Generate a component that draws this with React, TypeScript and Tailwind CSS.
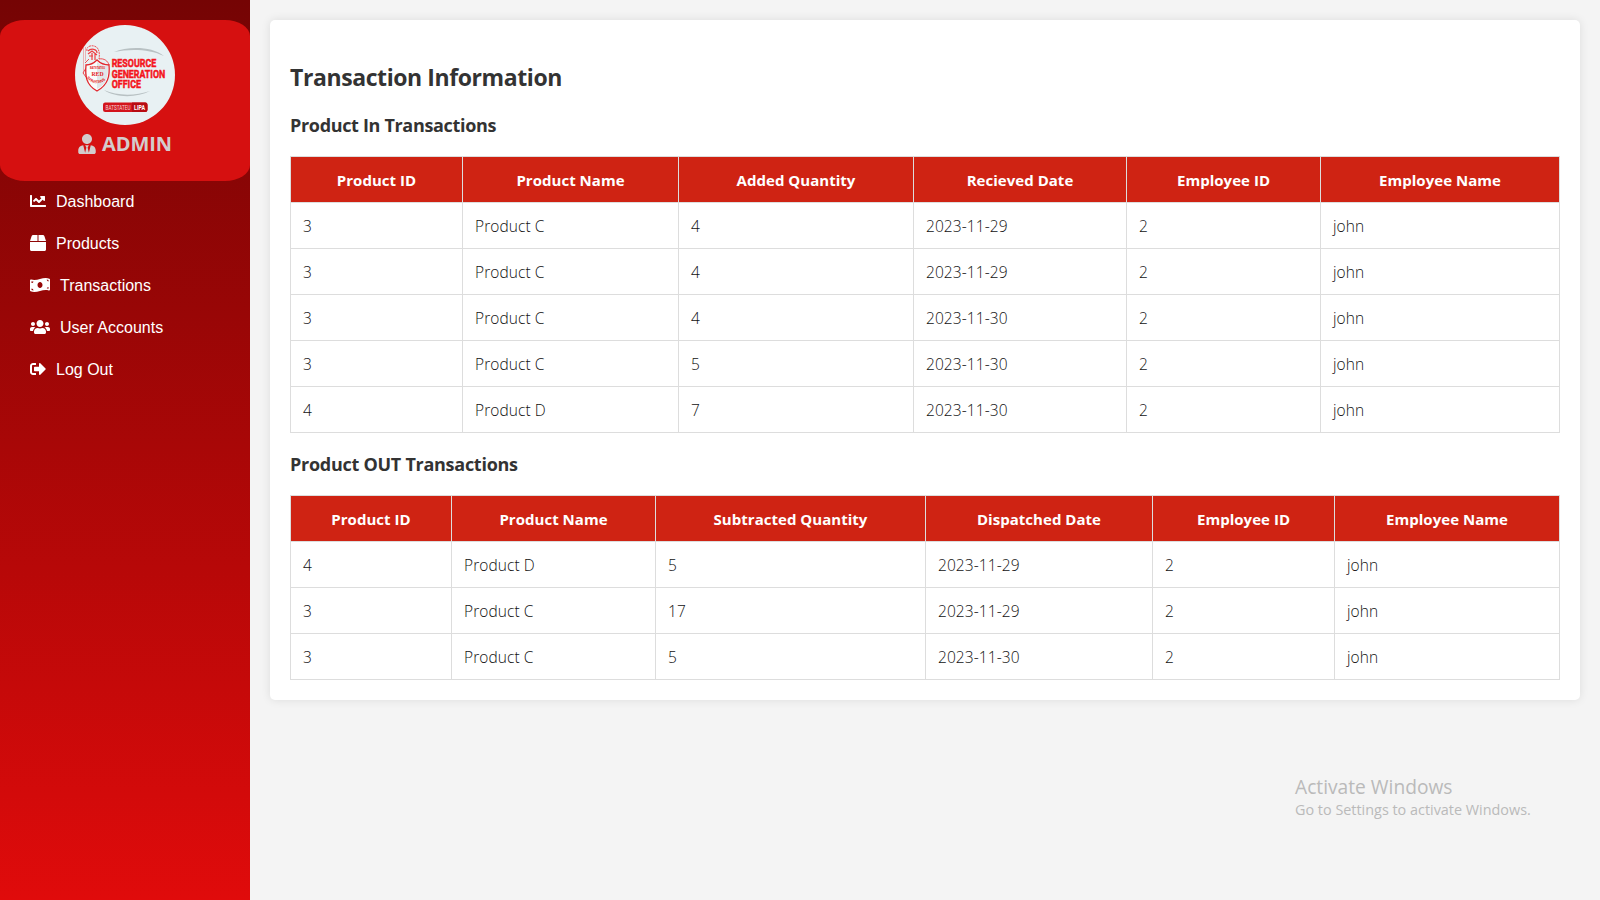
import {
  FaBox,
  FaChartLine,
  FaMoneyBillWave,
  FaSignOutAlt,
  FaUsers,
  FaUserTie,
} from "react-icons/fa";
import type { IconType } from "react-icons";

const UI_FONT = "font-['Open_Sans','Noto_Sans',sans-serif]";

type NavItem = { label: string; icon: IconType; iconClass: string };

const navItems: NavItem[] = [
  { label: "Dashboard", icon: FaChartLine, iconClass: "mb-0.5 h-4 w-4" },
  { label: "Products", icon: FaBox, iconClass: "mb-0.5 h-4 w-4" },
  { label: "Transactions", icon: FaMoneyBillWave, iconClass: "mb-0.5 h-4 w-5" },
  { label: "User Accounts", icon: FaUsers, iconClass: "mb-0.5 h-4 w-5" },
  { label: "Log Out", icon: FaSignOutAlt, iconClass: "mb-0.5 h-4 w-4" },
];

type Column = { label: string; width: string };

const inColumns: Column[] = [
  { label: "Product ID", width: "w-[172px]" },
  { label: "Product Name", width: "w-[216px]" },
  { label: "Added Quantity", width: "w-[235px]" },
  { label: "Recieved Date", width: "w-[213px]" },
  { label: "Employee ID", width: "w-[194px]" },
  { label: "Employee Name", width: "w-[239px]" },
];

const inRows = [
  ["3", "Product C", "4", "2023-11-29", "2", "john"],
  ["3", "Product C", "4", "2023-11-29", "2", "john"],
  ["3", "Product C", "4", "2023-11-30", "2", "john"],
  ["3", "Product C", "5", "2023-11-30", "2", "john"],
  ["4", "Product D", "7", "2023-11-30", "2", "john"],
];

const outColumns: Column[] = [
  { label: "Product ID", width: "w-[161px]" },
  { label: "Product Name", width: "w-[204px]" },
  { label: "Subtracted Quantity", width: "w-[270px]" },
  { label: "Dispatched Date", width: "w-[227px]" },
  { label: "Employee ID", width: "w-[182px]" },
  { label: "Employee Name", width: "w-[225px]" },
];

const outRows = [
  ["4", "Product D", "5", "2023-11-29", "2", "john"],
  ["3", "Product C", "17", "2023-11-29", "2", "john"],
  ["3", "Product C", "5", "2023-11-30", "2", "john"],
];

function Logo() {
  return (
    <svg viewBox="0 0 100 100" className="h-[100px] w-[100px] shrink-0" aria-hidden="true">
      <circle cx="50" cy="50" r="50" fill="#e8f1f3" />
      <path d="M39 27 C52 21.5 76 20.5 89 31 C75 24 55 23.5 39 27Z" fill="#b8c1c3" />
      <path d="M29 65 C40 73 62 73 75 66 C60 71 42 71 29 65Z" fill="#b8c1c3" />
      <g fill="none" stroke="#ee3c42" strokeWidth="0.9">
        <path d="M8.5 22V49M10.5 22V36" opacity="0.4" />
        <path d="M12 26C11 22 15 20 19 21C24 22 25 28 24 34" strokeDasharray="2 .7" />
        <path d="M13 26C16 23 22 24 22 28M13 29L17 26L22 30M14 31H18M17 28V35M20 29V35" strokeWidth="1.2" />
        <path d="M10 38L14 34M24 34C29 33 33 36 34 40M11 43L8 48L11 52" />
      </g>
      <path
        d="M22 35C18 39 14 40 11 40C10 51 11 60 22 66C33 60 35 51 34 40C30 40 26 39 22 35Z"
        fill="#fafcfc"
        stroke="#e1262d"
        strokeWidth="1.3"
      />
      <path d="M22 37C26 40 29 41 33 41C33 52 32 59 22 64Z" fill="#dfe7e9" />
      <g
        fill="#e51d25"
        fontFamily="'Liberation Sans', sans-serif"
        fontWeight="700"
        textAnchor="middle"
      >
        <text x="22.5" y="44.2" fontSize="2.8" textLength="15" lengthAdjust="spacingAndGlyphs">BATSTATEU</text>
        <text x="22.5" y="51" fontSize="6.2" textLength="12" lengthAdjust="spacingAndGlyphs" fontFamily="'Liberation Serif', serif">RED</text>
      </g>
      <path id="shield-arc" d="M11.5 53 Q22 64 34 52" fill="none" />
      <text fill="#e51d25" fontFamily="'Liberation Sans', sans-serif" fontWeight="700" fontSize="4">
        <textPath href="#shield-arc">SPARTANS</textPath>
      </text>
      <g
        fill="#f5141c"
        stroke="#f5141c"
        strokeWidth="0.5"
        fontFamily="Roboto, 'Liberation Sans', sans-serif"
        fontWeight="700"
        fontSize="11.8"
      >
        <text x="36.7" y="42" textLength="44.5" lengthAdjust="spacingAndGlyphs">RESOURCE</text>
        <text x="36.7" y="52.5" textLength="53.5" lengthAdjust="spacingAndGlyphs">GENERATION</text>
        <text x="36.7" y="63" textLength="29.3" lengthAdjust="spacingAndGlyphs">OFFICE</text>
      </g>
      <rect x="28" y="77.5" width="44.5" height="9.5" rx="2.2" fill="#d3141b" />
      <path d="M57 77.5H70.3A2.2 2.2 0 0 1 72.5 79.7V84.8A2.2 2.2 0 0 1 70.3 87H57Z" fill="#b80c12" />
      <g fontFamily="Roboto, 'Liberation Sans', sans-serif" fontSize="7.6" fill="#fff">
        <text x="30.5" y="85" textLength="25" lengthAdjust="spacingAndGlyphs" opacity="0.8">BATSTATEU</text>
        <text x="59" y="85" textLength="11" lengthAdjust="spacingAndGlyphs" fontWeight="700">LIPA</text>
      </g>
    </svg>
  );
}

function Sidebar() {
  return (
    <aside className="flex h-full w-[250px] shrink-0 flex-col bg-linear-to-b from-[#750404] to-[#e00b0b] pt-5">
      <div className="flex h-[161px] flex-col items-center rounded-[10%] bg-[#d61010] pt-[5px]">
        <Logo />
        <div className="mt-[3px] flex h-8 items-center gap-[6px] text-[#d3cccc]">
          <FaUserTie className="h-5 w-[18px]" />
          <span className={`${UI_FONT} text-[20px] font-bold leading-8 tracking-[-0.1px]`}>ADMIN</span>
        </div>
      </div>
      <nav className="flex flex-col font-['Liberation_Sans',sans-serif] text-base text-white">
        {navItems.map(({ label, icon: Icon, iconClass }) => (
          <a key={label} className="flex h-[42px] items-center gap-2.5 pl-[30px]">
            <Icon className={iconClass} />
            <span>{label}</span>
          </a>
        ))}
      </nav>
    </aside>
  );
}

function TransactionTable({ columns, rows }: { columns: Column[]; rows: string[][] }) {
  return (
    <table className="w-[1270px] table-fixed border-collapse leading-[21px]">
      <thead>
        <tr className="h-[46px] bg-[#cf2313] text-white">
          {columns.map((c) => (
            <th
              key={c.label}
              className={`${c.width} border border-[#dddddd] px-0 pb-0 pt-0.5 text-[15px] font-bold tracking-[0.03px]`}
            >
              {c.label}
            </th>
          ))}
        </tr>
      </thead>
      <tbody>
        {rows.map((row, r) => (
          <tr key={r} className="h-[46px]">
            {row.map((cell, c) => (
              <td
                key={c}
                className="border border-[#dddddd] px-3 pb-0 pt-0.5 text-[15.5px] font-light tracking-[0.08px] text-[#111111]"
              >
                {cell}
              </td>
            ))}
          </tr>
        ))}
      </tbody>
    </table>
  );
}

export default function App() {
  return (
    <div className="relative flex h-[900px] w-[1600px] overflow-hidden bg-[#f4f4f4]">
      <Sidebar />
      <main className={`${UI_FONT} flex-1 p-5 text-[#333333]`}>
        <section className="h-[680px] rounded-[5px] bg-white px-5 pt-[39px] shadow-[0_0_10px_rgba(0,0,0,0.1)]">
          <h2 className="h-[36px] text-[23px] font-bold leading-[36px] tracking-[-0.41px]">Transaction Information</h2>
          <h3 className="mt-[16px] h-[28px] text-[18px] font-bold leading-[28px] tracking-[-0.33px]">
            Product In Transactions
          </h3>
          <div className="mt-[17px]">
            <TransactionTable columns={inColumns} rows={inRows} />
          </div>
          <h3 className="mt-[17px] h-[28px] text-[18px] font-bold leading-[28px] tracking-[-0.27px]">
            Product OUT Transactions
          </h3>
          <div className="mt-[17px]">
            <TransactionTable columns={outColumns} rows={outRows} />
          </div>
        </section>
      </main>
      <div className={`${UI_FONT} pointer-events-none absolute left-[1295px] top-[773px] text-[#bababa]`}>
        <p className="text-[19.2px] leading-[28px]">Activate Windows</p>
        <p className="text-[14.4px] leading-[18px]">Go to Settings to activate Windows.</p>
      </div>
    </div>
  );
}
